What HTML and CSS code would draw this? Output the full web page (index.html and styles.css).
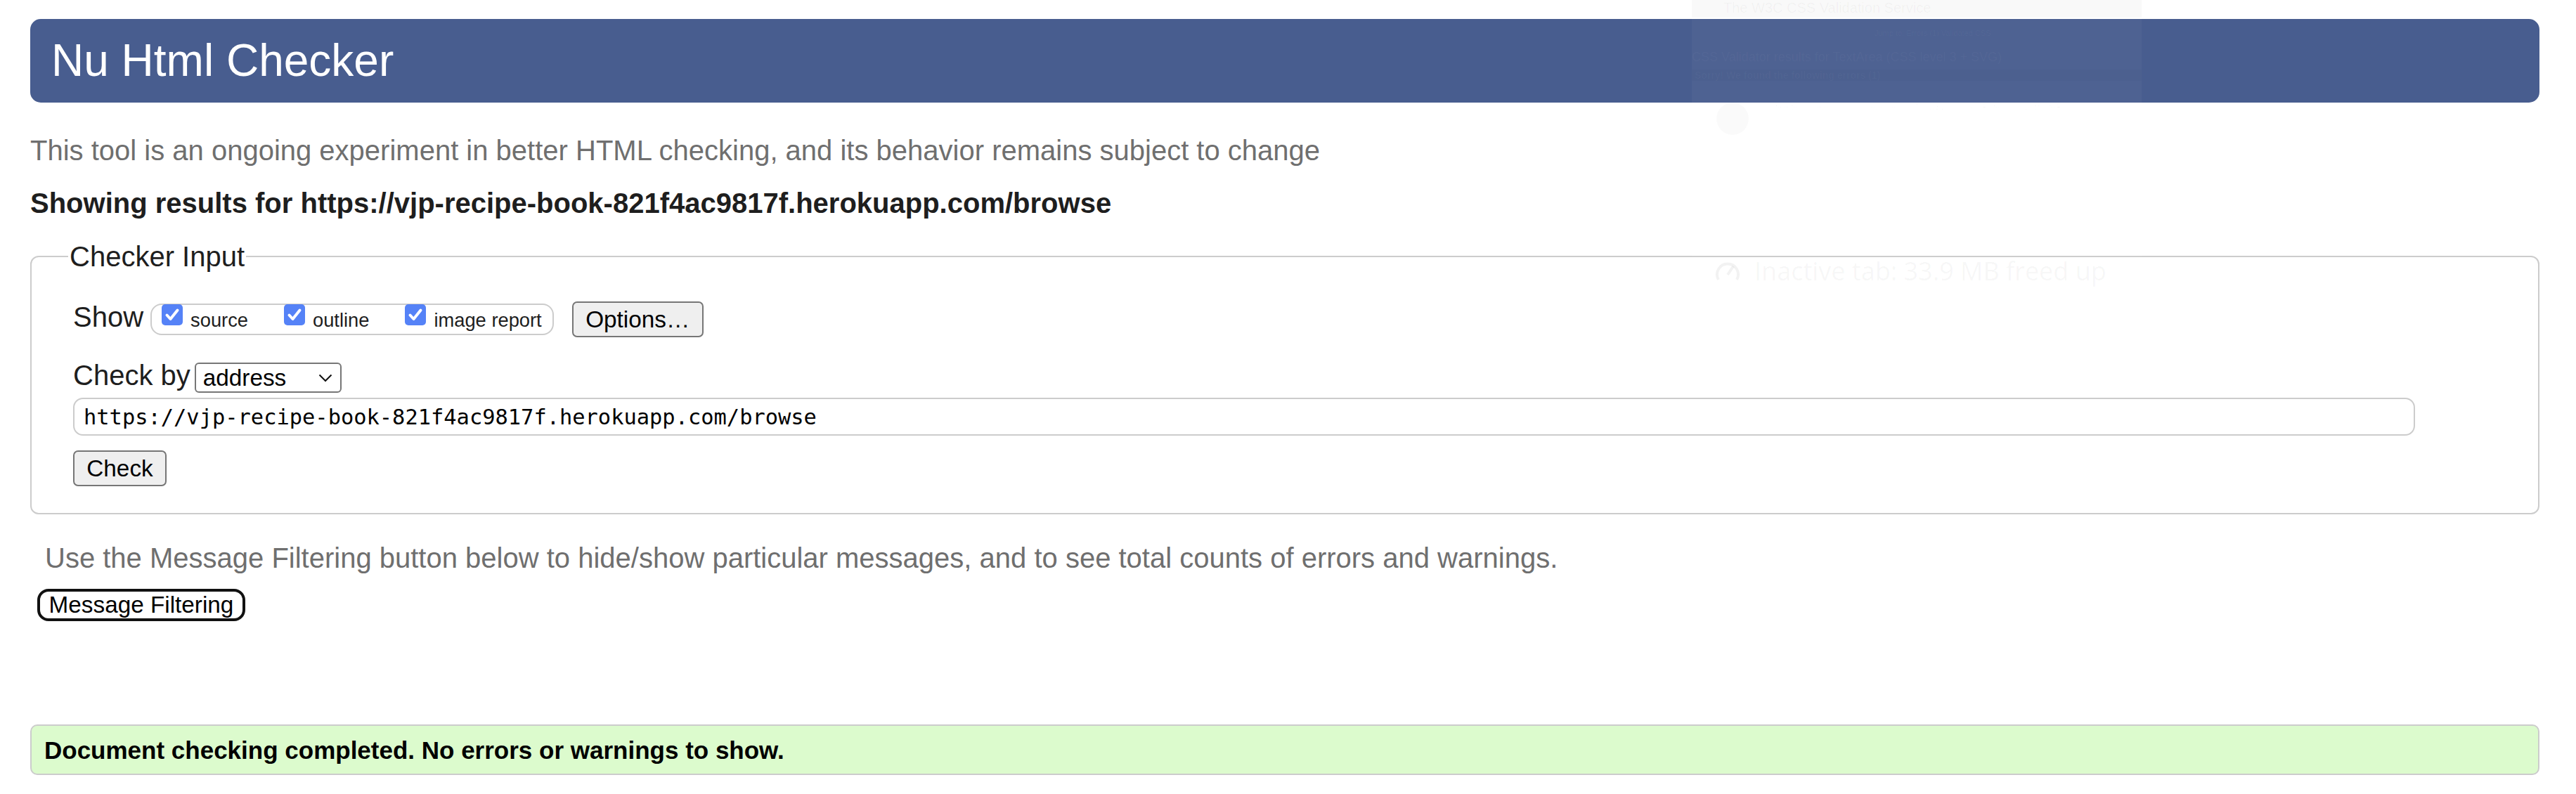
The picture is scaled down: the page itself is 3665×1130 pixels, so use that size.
FILE: index.html
```
<!DOCTYPE html>
<html lang="en">
<head>
<meta charset="utf-8">
<title>Showing results for https://vjp-recipe-book-821f4ac9817f.herokuapp.com/browse - Nu Html Checker</title>
<link rel="stylesheet" href="styles.css">
</head>
<body>
<h1 class="title">Nu Html Checker</h1>
<p class="intro">This tool is an ongoing experiment in better HTML checking, and its behavior remains subject to change</p>
<p class="showing">Showing results for https://vjp-recipe-book-821f4ac9817f.herokuapp.com/browse</p>

<fieldset class="checker">
  <legend class="legend">Checker Input</legend>
  <div class="row row-show">
    <span class="lbl">Show</span>
    <div class="group">
      <span class="cb"><span class="box"><svg width="30" height="30" viewBox="0 0 30 30"><path d="M7.5 15.5 L12.5 21 L22.5 8.5" fill="none" stroke="#fff" stroke-width="4" stroke-linecap="round" stroke-linejoin="round"/></svg></span><span class="cb-text">source</span></span>
      <span class="cb"><span class="box"><svg width="30" height="30" viewBox="0 0 30 30"><path d="M7.5 15.5 L12.5 21 L22.5 8.5" fill="none" stroke="#fff" stroke-width="4" stroke-linecap="round" stroke-linejoin="round"/></svg></span><span class="cb-text">outline</span></span>
      <span class="cb"><span class="box"><svg width="30" height="30" viewBox="0 0 30 30"><path d="M7.5 15.5 L12.5 21 L22.5 8.5" fill="none" stroke="#fff" stroke-width="4" stroke-linecap="round" stroke-linejoin="round"/></svg></span><span class="cb-text">image report</span></span>
    </div>
    <button class="btn btn-options" type="button">Options…</button>
  </div>
  <div class="row row-by">
    <span class="lbl lbl-by">Check by</span>
    <div class="select"><span>address</span><svg class="chev" width="20" height="12" viewBox="0 0 20 12"><path d="M1.5 1.5 L10 10 L18.5 1.5" fill="none" stroke="#111" stroke-width="2"/></svg></div>
  </div>
  <input class="url" type="text" value="https://vjp-recipe-book-821f4ac9817f.herokuapp.com/browse">
  <button class="btn btn-check" type="button">Check</button>
</fieldset>

<p class="use">Use the Message Filtering button below to hide/show particular messages, and to see total counts of errors and warnings.</p>
<button class="filter" type="button">Message Filtering</button>

<div class="result">Document checking completed. No errors or warnings to show.</div>

<div class="ghost" aria-hidden="true">
  <div class="ghost-top">The W3C CSS Validation Service</div>
  <div class="ghost-line">Jump to: Errors (1) Validated CSS</div>
  <div class="ghost-h">CSS Validator results for TextArea (CSS level 3 + SVG)</div>
  <div class="ghost-band">Sorry! We found the following errors (1)</div>
  <div class="ghost-mid">
    <span class="ghost-logo"></span>
    <span class="ghost-small">Interested in "developing" your developer skills? In W3C's hands-on Professional Certificate Program</span>
  </div>
  <div class="ghost-tab">
    <svg width="36" height="30" viewBox="0 0 36 30"><path d="M5 27 A15 15 0 1 1 31 27" fill="none" stroke="rgba(0,0,0,0.05)" stroke-width="4"/><path d="M18 20 L26 8" stroke="rgba(0,0,0,0.05)" stroke-width="4"/></svg>
    <span>Inactive tab: 33.9 MB freed up</span>
  </div>
</div>
</body>
</html>
```

FILE: styles.css
```
html {
  background: #fff;
}

body {
  margin: 0;
  padding: 0 52px 0 43px;
  font-family: "Liberation Sans", Arial, sans-serif;
  font-size: 40px;
  line-height: 46px;
  color: #222;
}

.title {
  margin: 27px 0 0;
  height: 119px;
  line-height: 119px;
  padding-left: 30px;
  font-size: 64px;
  font-weight: normal;
  color: #fff;
  background: #485d8f;
  border-radius: 15px;
}

.intro {
  margin: 45px 0 0;
  color: #6f6f6f;
}

.showing {
  margin: 29px 0 0;
  font-weight: bold;
  color: #1e1e1e;
}

.checker {
  margin: 30px 0 0;
  padding: 0 0 38px 59px;
  border: 2px solid #cccccc;
  border-radius: 12px;
  min-width: 0;
}

.legend {
  margin-left: -7px;
  padding: 0 2px;
  font-size: 40px;
  line-height: 46px;
  color: #1e1e1e;
}

.row {
  display: flex;
  align-items: center;
}

.row-show {
  margin-top: 41px;
}

.row-by {
  margin-top: 36px;
}

.lbl {
  margin-bottom: 7px;
  margin-right: 10px;
  line-height: 36px;
  color: #1e1e1e;
}

.lbl-by {
  margin-right: 6px;
}

.group {
  display: flex;
  align-items: flex-start;
  box-sizing: border-box;
  height: 45px;
  padding: 0 15px 0 14px;
  border: 2px solid #cccccc;
  border-radius: 16px;
}

.cb {
  display: flex;
  align-items: flex-start;
  margin-right: 51px;
}

.cb:last-child {
  margin-right: 0;
}

.box {
  display: block;
  width: 30px;
  height: 30px;
  margin-top: -1px;
  border-radius: 5px;
  background: #5582f7;
}

.box svg {
  display: block;
}

.cb-text {
  margin-top: 7px;
  margin-left: 11px;
  font-size: 27.3px;
  line-height: 30px;
  color: #1e1e1e;
}

.btn {
  box-sizing: border-box;
  height: 51px;
  padding: 0;
  font-family: "Liberation Sans", Arial, sans-serif;
  font-size: 33.3px;
  color: #000;
  background: #efefef;
  border: 2px solid #767676;
  border-radius: 7px;
}

.btn-options {
  width: 187px;
  margin-left: 26px;
}

.btn-check {
  display: block;
  width: 133px;
  margin-top: 21px;
}

.select {
  display: flex;
  align-items: center;
  box-sizing: border-box;
  width: 209px;
  height: 43px;
  padding-left: 10px;
  border: 2px solid #767676;
  border-radius: 6px;
  font-size: 33.3px;
  line-height: 38px;
  color: #000;
}

.chev {
  margin-left: auto;
  margin-right: 11px;
}

.url {
  display: block;
  box-sizing: border-box;
  width: 95%;
  height: 54px;
  margin: 7px 0 0;
  padding: 0 0 0 13px;
  border: 2px solid #cccccc;
  border-radius: 14px;
  font-family: "DejaVu Sans Mono", "Liberation Mono", monospace;
  font-size: 30.4px;
  color: #000;
  background: #fff;
  outline: none;
}

.use {
  margin: 39px 0 0;
  padding-left: 21px;
  color: #6f6f6f;
}

.filter {
  display: block;
  box-sizing: border-box;
  width: 296px;
  height: 46px;
  margin: 21px 0 0 10px;
  padding: 0;
  font-family: "Liberation Sans", Arial, sans-serif;
  font-size: 33.3px;
  color: #000;
  background: #fff;
  border: 4px solid #111;
  border-radius: 16px;
}

.result {
  margin-top: 147px;
  padding: 12px 0 10px 18px;
  border: 2px solid #cccccc;
  border-radius: 10px;
  background: #dcfbcd;
  font-size: 35px;
  font-weight: bold;
  color: #000;
}

/* faint ghost of another window over the page */
.ghost {
  position: absolute;
  left: 2407px;
  top: 0;
  width: 640px;
  height: 435px;
  background: rgba(255, 255, 255, 0.035);
  border-radius: 0 0 22px 22px;
  font-family: "Liberation Sans", Arial, sans-serif;
  overflow: hidden;
}

.ghost-top {
  height: 25px;
  padding-left: 45px;
  font-size: 20px;
  line-height: 22px;
  color: rgba(0, 0, 0, 0.04);
  background: rgba(0, 0, 0, 0.022);
}

.ghost-line {
  margin-top: 10px;
  padding-left: 260px;
  font-size: 11px;
  line-height: 24px;
  color: rgba(255, 255, 255, 0.04);
}

.ghost-h {
  margin-top: 10px;
  font-size: 18px;
  line-height: 24px;
  color: rgba(255, 255, 255, 0.04);
}

.ghost-band {
  margin-top: 6px;
  padding-left: 4px;
  font-size: 14px;
  font-weight: bold;
  line-height: 16px;
  color: rgba(255, 255, 255, 0.03);
  background: rgba(0, 0, 0, 0.015);
}

.ghost-mid {
  display: flex;
  align-items: flex-start;
  gap: 30px;
  margin-top: 31px;
  padding-left: 35px;
}

.ghost-logo {
  flex: none;
  width: 46px;
  height: 46px;
  border-radius: 50%;
  background: rgba(0, 0, 0, 0.02);
}

.ghost-small {
  font-size: 10px;
  line-height: 14px;
  color: rgba(0, 0, 0, 0.03);
}

.ghost-tab {
  display: flex;
  align-items: center;
  gap: 20px;
  margin-top: 174px;
  padding-left: 33px;
  font-family: "Open Sans", "Noto Sans", sans-serif;
  font-size: 36px;
  line-height: 40px;
  color: rgba(0, 0, 0, 0.045);
}
```
